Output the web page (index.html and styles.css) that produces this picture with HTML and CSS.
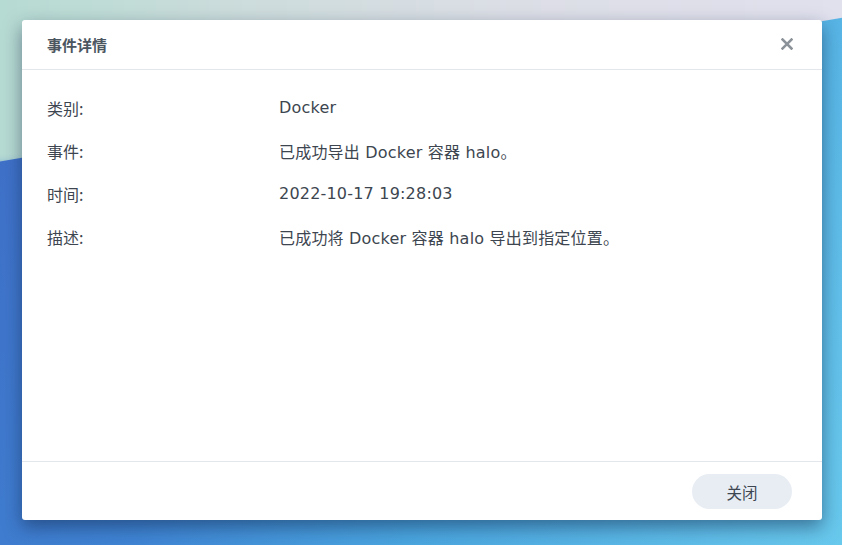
FILE: index.html
```html
<!DOCTYPE html>
<html lang="zh-CN">
<head>
<meta charset="utf-8">
<title>事件详情</title>
<link rel="stylesheet" href="styles.css">
</head>
<body>
<div class="desktop">
  <div class="dialog">
    <div class="header">
      <span class="title">事件详情</span>
      <span class="close" aria-label="关闭">
        <svg width="12" height="12" viewBox="0 0 12 12"><path d="M1.5 1.5 L10.5 10.5 M10.5 1.5 L1.5 10.5" stroke="#8c9299" stroke-width="2.5" stroke-linecap="square"/></svg>
      </span>
    </div>
    <div class="body">
      <div class="row"><span class="label">类别:</span><span class="value">Docker</span></div>
      <div class="row"><span class="label">事件:</span><span class="value">已成功导出 Docker 容器 halo。</span></div>
      <div class="row"><span class="label">时间:</span><span class="value">2022-10-17 19:28:03</span></div>
      <div class="row"><span class="label">描述:</span><span class="value">已成功将 Docker 容器 halo 导出到指定位置。</span></div>
    </div>
    <div class="footer">
      <button class="btn">关闭</button>
    </div>
  </div>
</div>
</body>
</html>
```

FILE: styles.css
```css
html, body {
  margin: 0;
  padding: 0;
  width: 842px;
  height: 545px;
  overflow: hidden;
}
.desktop {
  position: relative;
  width: 842px;
  height: 545px;
  padding: 20px 20px 0 22px;
  box-sizing: border-box;
  overflow: hidden;
  background: linear-gradient(115deg, #3f6cc6 0%, #3f84d4 35%, #4aa5df 60%, #69c9ed 100%);
  font-family: "DejaVu Sans", "Noto Sans CJK SC", sans-serif;
}
.desktop::before {
  content: "";
  position: absolute;
  left: -20px;
  top: -20px;
  width: 890px;
  height: 185px;
  background: linear-gradient(90deg, #b4dbd2 0%, #cddcdc 30%, #dcdee6 60%, #e1e0ee 100%);
  clip-path: polygon(0 0, 100% 0, 100% 33px, 0 100%);
  filter: blur(5px);
}
.dialog {
  position: relative;
  width: 800px;
  height: 500px;
  background: #fff;
  border-radius: 3px;
  box-shadow: 0 7px 18px rgba(15, 35, 70, 0.5);
  display: flex;
  flex-direction: column;
}
.header {
  height: 49px;
  border-bottom: 1px solid #e3e6ea;
  display: flex;
  align-items: center;
  justify-content: space-between;
  padding: 0 29px 0 25px;
}
.title {
  font-family: "Noto Sans CJK SC", sans-serif;
  font-size: 15px;
  font-weight: 700;
  color: #4b5660;
}
.close {
  display: flex;
  width: 12px;
  height: 12px;
  margin-top: -1px;
}
.body {
  flex: 1;
  padding: 16px 25px 0 25px;
}
.row {
  display: flex;
  height: 43px;
  align-items: center;
  color: #3d4650;
}
.label {
  width: 232px;
  font-family: "Noto Sans CJK SC", sans-serif;
  font-size: 16px;
}
.value {
  font-family: "DejaVu Sans", "Noto Sans CJK SC", sans-serif;
  font-size: 16px;
  letter-spacing: 0.2px;
}
.footer {
  height: 59px;
  border-top: 1px solid #e3e6ea;
  display: flex;
  justify-content: flex-end;
  align-items: flex-start;
  padding: 12px 30px 0 0;
  box-sizing: border-box;
}
.btn {
  width: 100px;
  height: 35px;
  border: none;
  border-radius: 18px;
  background: #e8edf4;
  color: #3d4650;
  font-family: "Noto Sans CJK SC", sans-serif;
  font-size: 15.5px;
  padding: 0;
}
```
